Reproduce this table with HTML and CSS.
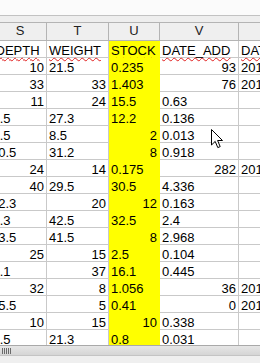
FILE: index.html
```html
<!DOCTYPE html>
<html>
<head>
<meta charset="utf-8">
<link rel="stylesheet" href="styles.css">
</head>
<body>
<div class="app">
  <div class="topband"></div>
  <div class="subband"></div>
  <div class="colheads">
    <div class="ch ch-s">S</div>
    <div class="ch">T</div>
    <div class="ch">U</div>
    <div class="ch">V</div>
    <div class="ch"></div>
  </div>
  <div class="sheet">
    <div class="grid">
      <div class="c cut-d"><span class="sp">DEPTH</span></div><div class="c"><span class="sp">WEIGHT</span></div><div class="c y"><span class="sp">STOCK</span></div><div class="c"><span class="sp">DATE_ADD</span></div><div class="c"><span class="sp">DAT</span></div>
      <div class="c r">10</div><div class="c">21.5</div><div class="c y">0.235</div><div class="c r">93</div><div class="c">201</div>
      <div class="c r">33</div><div class="c r">33</div><div class="c y">1.403</div><div class="c r">76</div><div class="c">201</div>
      <div class="c r">11</div><div class="c r">24</div><div class="c y">15.5</div><div class="c">0.63</div><div class="c"></div>
      <div class="c cut-a">2.5</div><div class="c">27.3</div><div class="c y">12.2</div><div class="c">0.136</div><div class="c"></div>
      <div class="c cut-a">2.5</div><div class="c">8.5</div><div class="c y r">2</div><div class="c">0.013</div><div class="c"></div>
      <div class="c cut-b">10.5</div><div class="c">31.2</div><div class="c y r">8</div><div class="c">0.918</div><div class="c"></div>
      <div class="c r">24</div><div class="c r">14</div><div class="c y">0.175</div><div class="c r">282</div><div class="c">201</div>
      <div class="c r">40</div><div class="c">29.5</div><div class="c y">30.5</div><div class="c">4.336</div><div class="c"></div>
      <div class="c cut-b">12.3</div><div class="c r">20</div><div class="c y r">12</div><div class="c">0.163</div><div class="c"></div>
      <div class="c cut-a">2.3</div><div class="c">42.5</div><div class="c y">32.5</div><div class="c">2.4</div><div class="c"></div>
      <div class="c cut-b">13.5</div><div class="c">41.5</div><div class="c y r">8</div><div class="c">2.968</div><div class="c"></div>
      <div class="c r">25</div><div class="c r">15</div><div class="c y">2.5</div><div class="c">0.104</div><div class="c"></div>
      <div class="c cut-a">6.1</div><div class="c r">37</div><div class="c y">16.1</div><div class="c">0.445</div><div class="c"></div>
      <div class="c r">32</div><div class="c r">8</div><div class="c y">1.056</div><div class="c r">36</div><div class="c">201</div>
      <div class="c cut-b">15.5</div><div class="c r">5</div><div class="c y">0.41</div><div class="c r">0</div><div class="c">201</div>
      <div class="c r">10</div><div class="c r">15</div><div class="c y r">10</div><div class="c">0.338</div><div class="c"></div>
      <div class="c cut-a">2.5</div><div class="c">21.3</div><div class="c y">0.8</div><div class="c">0.031</div><div class="c"></div>
    </div>
    <svg class="cursor" width="13" height="21" viewBox="0 0 13 21">
      <path d="M0.5 0.5 L0.5 16 L4.2 12.4 L6.8 18.6 L9.2 17.6 L6.6 11.5 L11.5 11.5 Z" fill="#fff" stroke="#000" stroke-width="1" stroke-linejoin="miter"/>
    </svg>
  </div>
  <div class="hscroll">
    <div class="bar">
      <div class="grip"><i></i><i></i><i></i><i></i><i></i></div>
    </div>
    <div class="under"></div>
  </div>
</div>
</body>
</html>
```
FILE: styles.css
```css
html, body {
  margin: 0;
  padding: 0;
  background: #ffffff;
}
body {
  width: 260px;
  height: 363px;
  overflow: hidden;
  font-family: "Liberation Sans", Arial, sans-serif;
  font-size: 13px;
  color: #000;
}
.app {
  width: 260px;
  height: 363px;
  overflow: hidden;
  display: flex;
  flex-direction: column;
}
.topband {
  height: 15px;
  background: #fbfbfb;
  border-bottom: 1px solid #c2c2c2;
  flex: none;
}
.subband {
  height: 6px;
  background: #eeeeee;
  flex: none;
}
.colheads {
  flex: none;
  display: grid;
  grid-template-columns: 47px 62px 51px 79px 60px;
  border-top: 1px solid #b4b4b4;
  border-bottom: 1px solid #b4b4b4;
  background: #efefef;
  height: 19px;
  box-sizing: border-box;
  width: 299px;
}
.ch {
  height: 17px;
  line-height: 15px;
  text-align: center;
  border-right: 1px solid #b4b4b4;
  box-sizing: border-box;
  color: #222;
}
.ch-s {
  padding-right: 6px;
}
.sheet {
  position: relative;
  flex: none;
  height: 304px;
  overflow: hidden;
}
.grid {
  display: grid;
  grid-template-columns: 47px 62px 51px 79px 60px;
  grid-auto-rows: 17px;
  width: 299px;
}
.c {
  box-sizing: border-box;
  height: 17px;
  padding: 2px 2px 0 2px;
  line-height: 16px;
  border-right: 1px solid #c9c9c9;
  border-bottom: 1px solid #c9c9c9;
  white-space: nowrap;
  overflow: visible;
}
.r {
  text-align: right;
}
.y {
  background: #ffff00;
  border-right-color: #ffff00;
  border-bottom-color: #ffff00;
}
.cut-a {
  padding-left: 0;
  text-indent: -7.5px;
}
.cut-b {
  padding-left: 0;
  text-indent: -9px;
}
.cut-d {
  padding-left: 0;
  text-indent: -4.5px;
}
.sp {
  text-decoration: underline wavy #e02020;
  text-decoration-thickness: 1px;
  text-underline-offset: 2px;
}
.cursor {
  position: absolute;
  left: 211px;
  top: 88px;
}
.hscroll {
  flex: none;
  height: 18px;
  display: flex;
  flex-direction: column;
}
.bar {
  height: 11px;
  box-sizing: border-box;
  border-top: 1px solid #a9a9a9;
  border-bottom: 1px solid #c4c4c4;
  background: linear-gradient(#e6e6e6, #d5d5d5);
  display: flex;
  align-items: center;
  padding-left: 2px;
}
.grip {
  display: flex;
  gap: 1px;
}
.grip i {
  display: block;
  width: 1px;
  height: 6px;
  background: #6a6a6a;
}
.under {
  flex: 1;
  background: #efefef;
}
```
